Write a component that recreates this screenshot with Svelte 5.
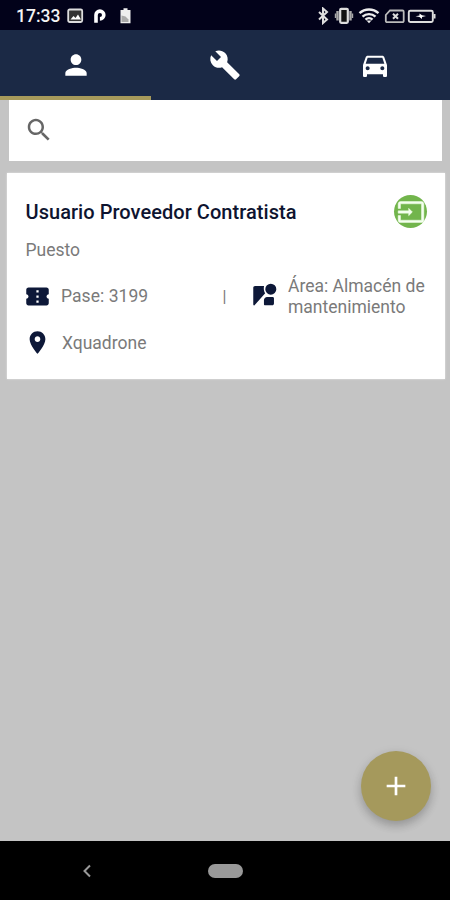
<script lang="ts">
	// Material icon outlines on a 24x24 grid
	const icons = {
		person:
			'M12 12c2.21 0 4-1.79 4-4s-1.79-4-4-4-4 1.79-4 4 1.79 4 4 4zm0 2c-2.67 0-8 1.34-8 4v2h16v-2c0-2.66-5.33-4-8-4z',
		build:
			'M22.7 19l-9.1-9.1c.9-2.3.4-5-1.5-6.9-2-2-5-2.4-7.4-1.3L9 6 6 9 1.6 4.7C.4 7.1.9 10.1 2.9 12.1c1.9 1.9 4.6 2.4 6.9 1.5l9.1 9.1c.4.4 1 .4 1.4 0l2.3-2.3c.5-.4.5-1.1.1-1.4z',
		car: 'M18.92 6.01C18.72 5.42 18.16 5 17.5 5h-11c-.66 0-1.21.42-1.42 1.01L3 12v8c0 .55.45 1 1 1h1c.55 0 1-.45 1-1v-1h12v1c0 .55.45 1 1 1h1c.55 0 1-.45 1-1v-8l-2.08-5.99zM6.5 16c-.83 0-1.5-.67-1.5-1.5S5.67 13 6.5 13s1.5.67 1.5 1.5S7.33 16 6.5 16zm11 0c-.83 0-1.5-.67-1.5-1.5s.67-1.5 1.5-1.5 1.5.67 1.5 1.5-.67 1.5-1.5 1.5zM5 11l1.5-4.5h11L19 11H5z',
		search:
			'M15.5 14h-.79l-.28-.27C15.41 12.59 16 11.11 16 9.5 16 5.91 13.09 3 9.5 3S3 5.91 3 9.5 5.91 16 9.5 16c1.61 0 3.09-.59 4.23-1.57l.27.28v.79l5 4.99L20.49 19l-4.99-5zm-6 0C7.01 14 5 11.99 5 9.5S7.01 5 9.5 5 14 7.01 14 9.5 11.99 14 9.5 14z',
		input:
			'M21 3.01H3c-1.1 0-2 .9-2 2V9h2V4.99h18v14.03H3V15H1v4.01c0 1.1.9 1.98 2 1.98h18c1.1 0 2-.88 2-1.98v-14c0-1.11-.9-2-2-2zM10 15.200l3.200-3.200L10 8.800V11H1v2h9v2.200z',
		ticket:
			'M22 10V6c0-1.11-.9-2-2-2H4c-1.1 0-1.99.89-1.99 2v4c1.1 0 1.99.9 1.99 2s-.89 2-2 2v4c0 1.1.9 2 2 2h16c1.1 0 2-.9 2-2v-4c-1.1 0-2-.9-2-2s.9-2 2-2zm-9 7.5h-2v-2h2v2zm0-4.5h-2v-2h2v2zm0-4.5h-2v-2h2v2z',
		area: 'M4.5 2.600h8c-.5 2.600-.2 4.700 1 6.600L4 19.700c-.5.5-1.100.2-1.100-.5V4.200c0-.9.7-1.600 1.600-1.600zM18.500.6a4.900 4.900 0 1 0 0 9.800 4.900 4.900 0 0 0 0-9.800zM15.200 12.400h4.900c.7 0 1.200.5 1.200 1.200v4.600c0 .9-.7 1.600-1.600 1.600h-6.300c-.6 0-1-.4-1-1v-3.600c0-1.500 1.300-2.800 2.800-2.800z',
		place:
			'M12 2C8.13 2 5 5.13 5 9c0 5.25 7 13 7 13s7-7.75 7-13c0-3.87-3.13-7-7-7zm0 9.5c-1.38 0-2.5-1.12-2.5-2.5s1.12-2.5 2.5-2.5 2.5 1.12 2.5 2.5-1.12 2.5-2.5 2.5z',
		add: 'M19 13h-6v6h-2v-6H5v-2h6V5h2v6h6v2z'
	};

	const tabs = [
		{ label: 'Personas', icon: icons.person },
		{ label: 'Herramientas', icon: icons.build },
		{ label: 'Vehículos', icon: icons.car }
	];
	let activeTab = $state(0);
	let query = $state('');

	const visitor = {
		name: 'Usuario Proveedor Contratista',
		role: 'Puesto',
		pass: 3199,
		area: 'Almacén de mantenimiento',
		company: 'Xquadrone'
	};
</script>

{#snippet icon(path: string, size: number)}
	<svg class="icon" width={size} height={size} viewBox="0 0 24 24" aria-hidden="true">
		<path d={path} />
	</svg>
{/snippet}

<div class="screen">
	<header class="status-bar">
		<span class="clock">17:33</span>
		<svg class="status-left" width="66" height="18" viewBox="0 0 66 18">
			<rect x="2.2" y="2.5" width="14" height="12.5" rx="1.5" fill="#333" stroke="#ddd" stroke-width="1.8" />
			<path d="M4.5 12.5l3-3.500 2 2 2.500-3.500 3 5z" fill="#fff" />
			<path d="M30 15.800V8a3.900 3.900 0 1 1 3.900 3.900" fill="none" stroke="#fff" stroke-width="3.600" />
			<path d="M54.5 3h3V1.200h4V3h3v13.200h-10z" fill="#eee" />
			<path d="M55.5 8.500l4 1 3 3v2.500h-7z" fill="#aaa" />
		</svg>
		<svg class="status-right" width="120" height="18" viewBox="0 0 120 18">
			<path d="M3 5l8 7.5-4 3.500V1.500l4 3.500-8 7.500" fill="none" stroke="#ddd" stroke-width="2" />
			<rect x="24.2" y="1.8" width="7.6" height="14" rx="1" fill="#111" stroke="#ddd" stroke-width="2.2" />
			<path d="M21.5 4v9.500M34.500 4v9.500" stroke="#aaa" stroke-width="2.4" />
			<path d="M19.5 6.500v4.500M36.500 6.500v4.500" stroke="#aaa" stroke-width="1.4" />
			<g fill="none" stroke="#eee" stroke-width="2.4">
				<path d="M43.5 6.200a14 14 0 0 1 19 0M46.500 9.700a9.600 9.600 0 0 1 13 0M49.500 12.700a5 5 0 0 1 7 0" />
			</g>
			<path d="M50.5 13.500l2.500 2.700 2.500-2.700z" fill="#eee" />
			<path d="M74 3.500h12.500a1.200 1.200 0 0 1 1.200 1.200v9.200a1.200 1.200 0 0 1-1.200 1.200H71a1.200 1.200 0 0 1-1.200-1.200V8z" fill="none" stroke="#bbb" stroke-width="1.8" />
			<path d="M77 6.800l5 5M82 6.800l-5 5" stroke="#ddd" stroke-width="2" />
			<rect x="92.8" y="3.7" width="24" height="11.3" rx="1.5" fill="none" stroke="#ddd" stroke-width="1.9" />
			<path d="M117.5 7h2v4.500h-2z" fill="#ddd" />
			<path d="M99.5 9.200l4-.8V6.500l2.500 1.700 4 .9-4 1v2l-2.500-2z" fill="#fff" />
		</svg>
	</header>

	<nav class="tabs">
		{#each tabs as tab, i (tab.label)}
			<button
				class="tab"
				class:active={activeTab === i}
				aria-label={tab.label}
				onclick={() => (activeTab = i)}
			>
				{@render icon(tab.icon, 32)}
			</button>
		{/each}
	</nav>

	<main class="content">
		<label class="search">
			{@render icon(icons.search, 30)}
			<input type="text" aria-label="Buscar" bind:value={query} />
		</label>

		<article class="card">
			<div class="card-header">
				<h2>{visitor.name}</h2>
				<span class="badge">{@render icon(icons.input, 28)}</span>
			</div>
			<p class="role">{visitor.role}</p>
			<div class="details">
				{@render icon(icons.ticket, 27)}
				<span class="pass">Pase: {visitor.pass}</span>
				<span class="divider">|</span>
				{@render icon(icons.area, 27)}
				<span class="area">Área: {visitor.area}</span>
			</div>
			<div class="company">
				{@render icon(icons.place, 27)}
				<span>{visitor.company}</span>
			</div>
		</article>

		<button class="fab" aria-label="Agregar">{@render icon(icons.add, 32)}</button>
	</main>

	<footer class="nav-bar">
		<svg class="back" width="12" height="16" viewBox="0 0 12 16">
			<path d="M9 2.5L3.500 8 9 13.500" fill="none" stroke="#999" stroke-width="2" />
		</svg>
		<span class="home"></span>
	</footer>
</div>

<style>
	:global(body) {
		margin: 0;
	}
	.screen {
		display: flex;
		flex-direction: column;
		width: 450px;
		height: 900px;
		overflow: hidden;
		background: #c4c4c4;
		font-family: Roboto, sans-serif;
		color: #7a7a7a;
	}
	.icon {
		display: block;
		flex: none;
		fill: currentColor;
	}
	button {
		border: 0;
		padding: 0;
		cursor: pointer;
	}

	.status-bar {
		display: flex;
		align-items: center;
		box-sizing: border-box;
		height: 30px;
		padding: 2px 14px 0 16px;
		background: #02021a;
	}
	.clock {
		width: 50px;
		color: #f4f4f4;
		font-size: 17.5px;
		font-weight: 500;
	}
	.status-right {
		margin-left: auto;
	}

	.tabs {
		display: grid;
		grid-template-columns: 151px 148px 151px;
		height: 70px;
		background: #1b2945;
	}
	.tab {
		display: flex;
		align-items: center;
		justify-content: center;
		box-sizing: border-box;
		padding-top: 4px;
		border-bottom: 4px solid transparent;
		background: none;
		color: #fff;
	}
	.tab.active {
		border-bottom-color: #a79a5b;
	}

	.content {
		position: relative;
		flex: 1;
		padding: 0 5.5px 0 7px;
	}
	.search {
		display: flex;
		align-items: center;
		height: 60.5px;
		margin: 0 2.5px 0 2px;
		padding-left: 15px;
		box-sizing: border-box;
		background: #fff;
		color: #666;
	}
	.search input {
		flex: 1;
		min-width: 0;
		border: 0;
		outline: 0;
		background: none;
		font: inherit;
		font-size: 18px;
	}

	.card {
		height: 206px;
		margin-top: 12.5px;
		padding: 22px 17.5px 0 18.5px;
		box-sizing: border-box;
		background: #fff;
		box-shadow: 0 0 2px rgba(255, 255, 255, 0.6);
		font-size: 17.5px;
	}
	.card-header {
		display: flex;
		align-items: center;
		justify-content: space-between;
		height: 33px;
	}
	h2 {
		margin: 0;
		color: #0e1430;
		font-size: 20px;
		font-weight: 500;
		letter-spacing: 0.05px;
		white-space: nowrap;
	}
	.badge {
		display: grid;
		place-items: center;
		width: 33px;
		height: 33px;
		border-radius: 50%;
		background: #72b54c;
		color: #f4ffee;
	}
	.badge .icon {
		stroke: currentColor;
		stroke-width: 0.4;
	}
	.role {
		margin: 12px 0 0;
		line-height: 20px;
	}
	.details {
		display: grid;
		grid-template-columns: 27px 171px 28px 27px 1fr;
		align-items: center;
		height: 44px;
		margin: 14px -10px 0 -2px;
	}
	.details .icon,
	.company .icon {
		color: #0d1838;
	}
	.pass {
		padding-left: 10.5px;
		letter-spacing: 0.05px;
	}
	.divider {
		padding-left: 1px;
		font-size: 16px;
	}
	.area {
		padding: 2px 0 0 11.5px;
		line-height: 21px;
	}
	.company {
		display: flex;
		align-items: center;
		height: 28px;
		margin: 10px 0 0 -2px;
	}
	.company span {
		padding: 2px 0 0 11.5px;
	}

	.fab {
		position: absolute;
		right: 19px;
		bottom: 20px;
		display: grid;
		place-items: center;
		width: 70px;
		height: 70px;
		border-radius: 50%;
		background: #a5995c;
		box-shadow:
			0 5px 8px rgba(0, 0, 0, 0.16),
			0 3px 12px rgba(0, 0, 0, 0.1);
		color: #fff;
	}

	.nav-bar {
		display: grid;
		grid-template-columns: 80px 1fr 80px;
		align-items: center;
		height: 59px;
		background: #000;
	}
	.back {
		justify-self: end;
		margin-right: -13px;
	}
	.home {
		justify-self: center;
		width: 35px;
		height: 14px;
		border-radius: 7px;
		background: #999;
	}
</style>
